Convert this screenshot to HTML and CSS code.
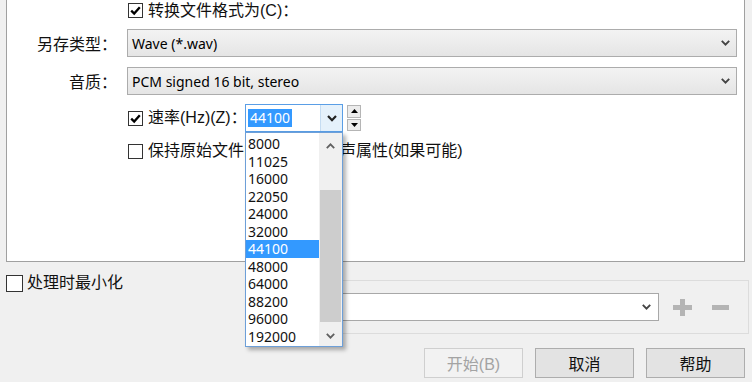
FILE: index.html
```html
<!DOCTYPE html>
<html lang="zh">
<head>
<meta charset="utf-8">
<title>转换</title>
<link rel="stylesheet" href="styles.css">
</head>
<body>
<div class="panel">
  <div class="row row1">
    <div class="indent"></div>
    <span class="cb"><svg width="11" height="11" viewBox="0 0 11 11"><path d="M1.2 5.6 L4.2 8.6 L9.8 2.2" fill="none" stroke="#000" stroke-width="2.3"/></svg></span>
    <span class="txt">转换文件格式为(C)：</span>
  </div>
  <div class="row row2">
    <span class="lbl">另存类型：</span>
    <div class="combo"><span>Wave (*.wav)</span><svg class="chev" width="9" height="6" viewBox="0 0 9 6"><path d="M0.8 0.8 L4.5 4.6 L8.2 0.8" fill="none" stroke="#444" stroke-width="1.9"/></svg></div>
  </div>
  <div class="row row3">
    <span class="lbl">音质：</span>
    <div class="combo"><span>PCM signed 16 bit, stereo</span><svg class="chev" width="9" height="6" viewBox="0 0 9 6"><path d="M0.8 0.8 L4.5 4.6 L8.2 0.8" fill="none" stroke="#444" stroke-width="1.9"/></svg></div>
  </div>
  <div class="row row4">
    <div class="indent"></div>
    <span class="cb"><svg width="11" height="11" viewBox="0 0 11 11"><path d="M1.2 5.6 L4.2 8.6 L9.8 2.2" fill="none" stroke="#000" stroke-width="2.3"/></svg></span>
    <span class="txt rate">速率(Hz)(Z)：</span>
    <div class="field">
      <div class="field-text"><span class="sel">44100</span></div>
      <div class="field-btn"><svg width="10" height="7" viewBox="0 0 10 7"><path d="M1 1 L5 5.2 L9 1" fill="none" stroke="#222" stroke-width="2.2"/></svg></div>
      <div class="dropdown">
        <div class="items">
          <div class="item">8000</div>
          <div class="item">11025</div>
          <div class="item">16000</div>
          <div class="item">22050</div>
          <div class="item">24000</div>
          <div class="item">32000</div>
          <div class="item selected">44100</div>
          <div class="item">48000</div>
          <div class="item">64000</div>
          <div class="item">88200</div>
          <div class="item">96000</div>
          <div class="item">192000</div>
        </div>
        <div class="sb">
          <div class="sb-btn sb-up"><svg width="9" height="6" viewBox="0 0 9 6"><path d="M0.8 5.2 L4.5 1.4 L8.2 5.2" fill="none" stroke="#606060" stroke-width="1.8"/></svg></div>
          <div class="thumb"></div>
          <div class="sb-btn sb-down"><svg width="9" height="6" viewBox="0 0 9 6"><path d="M0.8 0.8 L4.5 4.6 L8.2 0.8" fill="none" stroke="#606060" stroke-width="1.8"/></svg></div>
        </div>
      </div>
    </div>
    <div class="spin">
      <div class="spin-b"><svg width="7" height="4" viewBox="0 0 7 4"><path d="M0 4 L3.5 0 L7 4 Z" fill="#000"/></svg></div>
      <div class="spin-b"><svg width="7" height="4" viewBox="0 0 7 4"><path d="M0 0 L3.5 4 L7 0 Z" fill="#000"/></svg></div>
    </div>
  </div>
  <div class="row row5">
    <div class="indent"></div>
    <span class="cb"></span>
    <span class="txt">保持原始文件的速率和立体声属性(如果可能)</span>
  </div>
</div>
<div class="bottom-row">
  <div class="minrow">
    <span class="cb big"></span>
    <span class="txt">处理时最小化</span>
  </div>
  <div class="group">
    <div class="combo2"><svg class="chev" width="9" height="6" viewBox="0 0 9 6"><path d="M0.8 0.8 L4.5 4.6 L8.2 0.8" fill="none" stroke="#444" stroke-width="1.9"/></svg></div>
    <svg class="plus" width="19" height="17" viewBox="0 0 19 17"><path d="M7 0 H12 V6 H19 V11 H12 V17 H7 V11 H0 V6 H7 Z" fill="#b4b4b4"/></svg>
    <svg class="minus" width="17" height="5" viewBox="0 0 17 5"><rect x="0" y="0" width="17" height="5" fill="#b4b4b4"/></svg>
  </div>
</div>
<div class="buttons">
  <div class="btn disabled">开始(B)</div>
  <div class="btn">取消</div>
  <div class="btn">帮助</div>
</div>
</body>
</html>
```
FILE: styles.css
```css
html, body {
  margin: 0;
  padding: 0;
}
body {
  width: 752px;
  height: 382px;
  overflow: hidden;
  background: #f0f0f0;
  font-family: "Liberation Sans", "Noto Sans CJK SC", sans-serif;
  font-size: 16px;
  color: #111;
}
.panel {
  margin-left: 6px;
  width: 739px;
  height: 262px;
  box-sizing: border-box;
  background: #fff;
  border: 1px solid #a0a0a0;
  border-top: none;
  display: flex;
  flex-direction: column;
}
.row {
  display: flex;
  align-items: center;
}
.row1 { height: 21px; }
.row2 { margin-top: 8px; height: 28px; }
.row3 { margin-top: 10px; height: 28px; }
.row4 { margin-top: 9px; height: 28px; }
.row5 { margin-top: 9px; height: 20px; }
.indent {
  width: 121px;
  flex: none;
}
.lbl {
  width: 110px;
  margin-right: 10px;
  text-align: right;
  flex: none;
  white-space: nowrap;
}
.txt {
  white-space: nowrap;
  line-height: 20px;
}
.cb {
  width: 15px;
  height: 15px;
  box-sizing: border-box;
  border: 1px solid #333;
  background: #fff;
  display: flex;
  align-items: center;
  justify-content: center;
  margin-right: 5px;
  flex: none;
}
.cb.big {
  width: 17px;
  height: 17px;
}
.combo {
  width: 610px;
  height: 28px;
  box-sizing: border-box;
  border: 1px solid #acacac;
  background: linear-gradient(#f3f3f3, #e5e5e5);
  display: flex;
  align-items: center;
  justify-content: space-between;
  padding: 0 6px 0 4px;
  font-family: "Noto Sans", sans-serif;
  font-size: 14px;
  color: #000;
}
.rate {
  width: 97px;
  flex: none;
}
.field {
  position: relative;
  width: 98px;
  height: 28px;
  box-sizing: border-box;
  border: 1px solid #5a9ee6;
  background: #fff;
  display: flex;
  flex: none;
}
.field-text {
  flex: 1;
  display: flex;
  align-items: center;
  padding-left: 2px;
  font-family: "Noto Sans", sans-serif;
  font-size: 14px;
}
.sel {
  background: #3399ff;
  color: #fff;
  padding: 0 2px;
  line-height: 18px;
}
.field-btn {
  width: 21px;
  border-left: 1px solid #c5dcf2;
  background: #e5f1fb;
  display: flex;
  align-items: center;
  justify-content: center;
}
.dropdown {
  position: absolute;
  left: -1px;
  top: 27px;
  width: 98px;
  height: 215px;
  box-sizing: border-box;
  border: 1px solid #6d9fd8;
  background: #fff;
  box-shadow: 3px 3px 4px rgba(0, 0, 0, 0.3);
  z-index: 10;
  display: flex;
}
.items {
  width: 73px;
  padding-top: 2px;
  font-family: "Noto Sans", sans-serif;
  font-size: 14px;
  color: #111;
}
.item {
  height: 17.5px;
  line-height: 17.5px;
  padding-left: 2px;
}
.item.selected {
  background: #3399ff;
  color: #fff;
}
.sb {
  width: 23px;
  background: #f0f0f0;
  display: flex;
  flex-direction: column;
  align-items: center;
}
.sb-btn {
  width: 100%;
  height: 21px;
  display: flex;
  align-items: center;
  justify-content: center;
}
.sb-up { height: 25px; }
.thumb {
  width: 21px;
  height: 132px;
  margin-top: 32px;
  background: #cdcdcd;
}
.sb-down { margin-top: auto; }
.spin {
  margin-left: 4px;
  width: 14px;
  height: 26px;
  display: flex;
  flex-direction: column;
  gap: 1px;
  flex: none;
}
.spin-b {
  flex: 1;
  box-sizing: border-box;
  border: 1px solid #b5b5b5;
  background: #ececec;
  display: flex;
  align-items: center;
  justify-content: center;
}
.bottom-row {
  display: flex;
  align-items: flex-start;
}
.minrow {
  margin-left: 6px;
  margin-top: 11px;
  height: 20px;
  display: flex;
  align-items: center;
}
.minrow .cb {
  margin-right: 4px;
}
.group {
  margin-left: auto;
  margin-right: 3px;
  margin-top: 18px;
  width: 487px;
  height: 54px;
  box-sizing: border-box;
  border: 1px solid #dcdcdc;
  display: flex;
  align-items: center;
  padding-left: 7px;
}
.combo2 {
  width: 389px;
  height: 28px;
  box-sizing: border-box;
  border: 1px solid #a8a8a8;
  background: #fff;
  display: flex;
  align-items: center;
  justify-content: flex-end;
  padding-right: 7px;
}
.plus { margin-left: 14px; }
.minus { margin-left: 20px; }
.buttons {
  display: flex;
  justify-content: flex-end;
  gap: 12px;
  margin-top: 14px;
  padding-right: 7px;
}
.btn {
  width: 99px;
  height: 30px;
  box-sizing: border-box;
  border: 1px solid #adadad;
  background: #e3e3e3;
  display: flex;
  align-items: center;
  justify-content: center;
  font-size: 16px;
  color: #111;
}
.btn.disabled {
  color: #a3a3a3;
  border-color: #cfcfcf;
  background: #f2f2f2;
}
```
